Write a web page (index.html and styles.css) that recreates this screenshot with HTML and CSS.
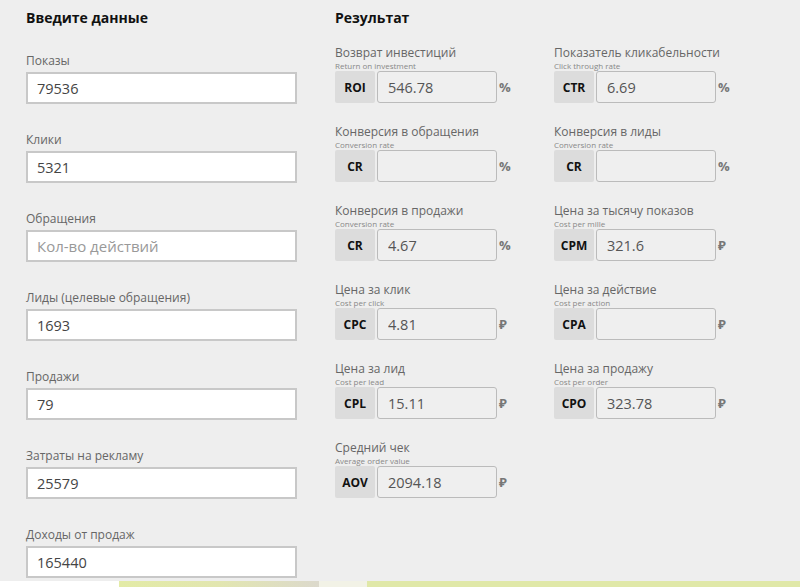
FILE: index.html
```html
<!DOCTYPE html>
<html lang="ru">
<head>
<meta charset="utf-8">
<title>Калькулятор</title>
<link rel="stylesheet" href="styles.css">
</head>
<body>
<div class="page">
  <div class="inputs">
    <h2 class="title title-left">Введите данные</h2>
    <div class="field"><label class="label">Показы</label><input class="inp" value="79536"></div>
    <div class="field"><label class="label">Клики</label><input class="inp" value="5321"></div>
    <div class="field"><label class="label">Обращения</label><input class="inp" placeholder="Кол-во действий"></div>
    <div class="field"><label class="label">Лиды (целевые обращения)</label><input class="inp" value="1693"></div>
    <div class="field"><label class="label">Продажи</label><input class="inp" value="79"></div>
    <div class="field"><label class="label">Затраты на рекламу</label><input class="inp" value="25579"></div>
    <div class="field"><label class="label">Доходы от продаж</label><input class="inp" value="165440"></div>
  </div>
  <div class="results">
    <h2 class="title title-right">Результат</h2>
    <div class="grid">
      <div class="res">
        <div class="res-label">Возврат инвестиций</div>
        <div class="res-sub">Return on investment</div>
        <div class="res-row"><span class="badge">ROI</span><input class="out" value="546.78" readonly><span class="unit">%</span></div>
      </div>
      <div class="res">
        <div class="res-label">Показатель кликабельности</div>
        <div class="res-sub">Click through rate</div>
        <div class="res-row"><span class="badge">CTR</span><input class="out" value="6.69" readonly><span class="unit">%</span></div>
      </div>
      <div class="res">
        <div class="res-label">Конверсия в обращения</div>
        <div class="res-sub">Conversion rate</div>
        <div class="res-row"><span class="badge">CR</span><input class="out" value="" readonly><span class="unit">%</span></div>
      </div>
      <div class="res">
        <div class="res-label">Конверсия в лиды</div>
        <div class="res-sub">Conversion rate</div>
        <div class="res-row"><span class="badge">CR</span><input class="out" value="" readonly><span class="unit">%</span></div>
      </div>
      <div class="res">
        <div class="res-label">Конверсия в продажи</div>
        <div class="res-sub">Conversion rate</div>
        <div class="res-row"><span class="badge">CR</span><input class="out" value="4.67" readonly><span class="unit">%</span></div>
      </div>
      <div class="res">
        <div class="res-label">Цена за тысячу показов</div>
        <div class="res-sub">Cost per mille</div>
        <div class="res-row"><span class="badge">CPM</span><input class="out" value="321.6" readonly><span class="unit">₽</span></div>
      </div>
      <div class="res">
        <div class="res-label">Цена за клик</div>
        <div class="res-sub">Cost per click</div>
        <div class="res-row"><span class="badge">CPC</span><input class="out" value="4.81" readonly><span class="unit">₽</span></div>
      </div>
      <div class="res">
        <div class="res-label">Цена за действие</div>
        <div class="res-sub">Cost per action</div>
        <div class="res-row"><span class="badge">CPA</span><input class="out" value="" readonly><span class="unit">₽</span></div>
      </div>
      <div class="res">
        <div class="res-label">Цена за лид</div>
        <div class="res-sub">Cost per lead</div>
        <div class="res-row"><span class="badge">CPL</span><input class="out" value="15.11" readonly><span class="unit">₽</span></div>
      </div>
      <div class="res">
        <div class="res-label">Цена за продажу</div>
        <div class="res-sub">Cost per order</div>
        <div class="res-row"><span class="badge">CPO</span><input class="out" value="323.78" readonly><span class="unit">₽</span></div>
      </div>
      <div class="res">
        <div class="res-label">Средний чек</div>
        <div class="res-sub">Average order value</div>
        <div class="res-row"><span class="badge">AOV</span><input class="out" value="2094.18" readonly><span class="unit">₽</span></div>
      </div>
    </div>
  </div>
</div>
<div class="strip">
  <div class="seg seg1"></div>
  <div class="seg seg2"></div>
  <div class="seg seg3"></div>
  <div class="seg seg4"></div>
</div>
</body>
</html>
```
FILE: styles.css
```css
html, body {
  margin: 0;
  padding: 0;
  background: #eeeeee;
  font-family: "Open Sans", "Noto Sans", sans-serif;
  overflow: hidden;
}
.page {
  display: flex;
  padding: 8px 0 0 26px;
  gap: 38px;
}
.inputs {
  width: 271px;
  display: flex;
  flex-direction: column;
}
.title {
  margin: 0;
  font-size: 14px;
  line-height: 20px;
  font-weight: 700;
  color: #111;
}
.title-left { margin-bottom: 24px; }
.title-right { margin-bottom: 17px; }
.field {
  display: flex;
  flex-direction: column;
  margin-bottom: 27px;
}
.field:last-child { margin-bottom: 0; }
.label {
  font-size: 12px;
  line-height: 18px;
  color: #666;
  margin-bottom: 2px;
}
.inp {
  box-sizing: border-box;
  width: 271px;
  height: 32px;
  border: 2px solid #c8c8c8;
  background: #fff;
  padding: 0 9px;
  font-family: "Open Sans", "Noto Sans", sans-serif;
  font-size: 14.5px;
  color: #444;
  outline: none;
  margin: 0;
}
.inp::placeholder { color: #999; font-size: 15px; }
.grid {
  display: grid;
  grid-template-columns: 219px 219px;
}
.res {
  display: flex;
  flex-direction: column;
  margin-bottom: 21px;
}
.res-label {
  font-size: 12px;
  line-height: 16px;
  color: #666;
}
.res-sub {
  font-size: 8px;
  line-height: 10px;
  color: #888;
}
.res-row {
  display: flex;
  align-items: center;
  height: 32px;
}
.badge {
  width: 40px;
  height: 32px;
  border-radius: 2px;
  background: #dcdcdc;
  color: #111;
  font-weight: 700;
  font-size: 12px;
  display: flex;
  align-items: center;
  justify-content: center;
}
.out {
  box-sizing: border-box;
  width: 120px;
  height: 32px;
  margin: 0 0 0 2px;
  border: 1px solid #bbbbbb;
  border-radius: 3px;
  background: #efefef;
  padding: 0 10px;
  font-family: "Open Sans", "Noto Sans", sans-serif;
  font-size: 14.5px;
  color: #555;
  outline: none;
}
.unit {
  margin-left: 2px;
  font-weight: 700;
  font-size: 13px;
  color: #777;
}
.strip {
  display: flex;
  height: 10px;
  margin-top: 3px;
}
.seg1 { width: 119px; background: #ffffff; }
.seg2 { width: 200px; background: linear-gradient(90deg, #e3eba6 0%, #e2e6b0 50%, #dcd9cc 100%); }
.seg3 { width: 48px; background: #f2f2e6; }
.seg4 { flex: 1; background: #e0e8a8; }
```
